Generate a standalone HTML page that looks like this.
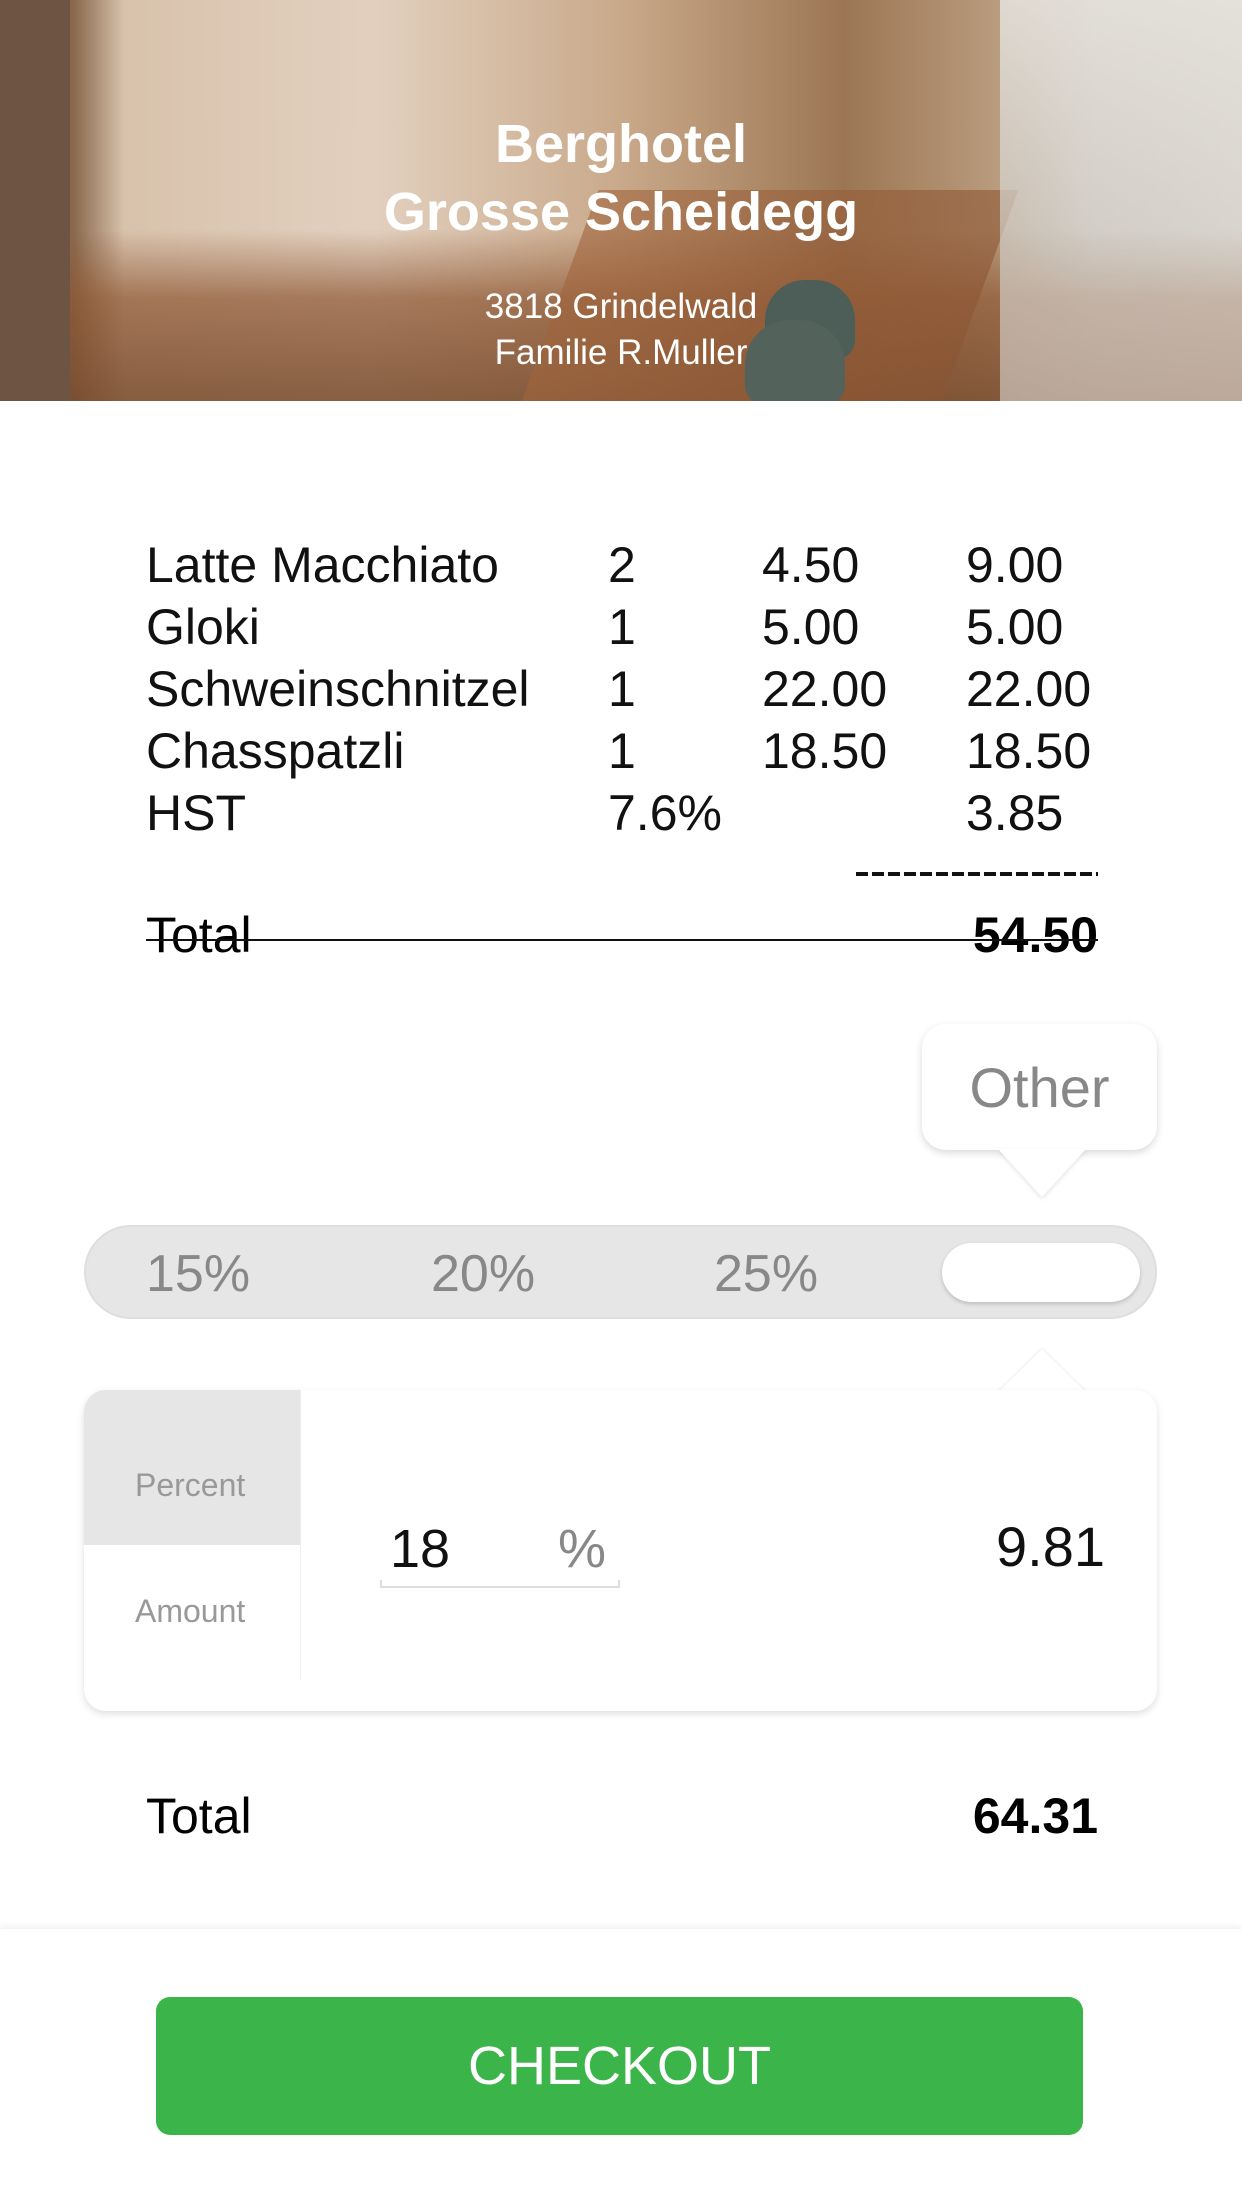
<!DOCTYPE html>
<html><head><meta charset="utf-8">
<style>
*{margin:0;padding:0;box-sizing:border-box}
body{width:1242px;height:2208px;background:#fff;font-family:"Liberation Sans",sans-serif;position:relative;overflow:hidden}
.abs{position:absolute}
.hdr{left:0;top:0;width:1242px;height:401px;overflow:hidden;
background:linear-gradient(90deg,#6b4a34 0%,#8a6a4e 6%,#d8c2ac 10%,#e2d0bf 30%,#c9a98a 50%,#9c7654 68%,#b89a7c 80%,#d7d2cc 88%,#ece8e3 100%)}
.t{color:#fff;text-align:center;width:1242px;left:0}
.row{font-size:50px;color:#111;height:62px;line-height:62px}
.c{position:absolute}
.g{color:#888}
</style></head><body>
<div class="abs hdr">
 <div class="abs" style="left:0;top:230px;width:1242px;height:171px;background:linear-gradient(180deg,rgba(150,90,50,0) 0%,rgba(140,85,50,.7) 40%,rgba(120,75,45,.85) 100%)"></div>
 <div class="abs" style="left:560px;top:190px;width:420px;height:211px;background:linear-gradient(90deg,rgba(160,100,60,.6),rgba(140,85,50,.6));transform:skewX(-20deg)"></div>
 <div class="abs" style="left:1000px;top:0;width:242px;height:401px;background:linear-gradient(180deg,rgba(227,223,217,.9),rgba(207,203,196,.7) 60%,rgba(220,215,210,.6))"></div>
 <div class="abs" style="left:765px;top:280px;width:90px;height:80px;border-radius:40px 40px 20px 20px;background:#4d5d57"></div>
 <div class="abs" style="left:745px;top:320px;width:100px;height:85px;border-radius:45px 45px 20px 20px;background:#53625b"></div>
 <div class="abs" style="left:0;top:0;width:70px;height:401px;background:#6e5442"></div>
</div>
<div class="abs t" style="top:110px;font-size:54px;font-weight:bold;line-height:68px">Berghotel<br>Grosse Scheidegg</div>
<div class="abs t" style="top:284px;font-size:35px;line-height:46px">3818 Grindelwald<br>Familie R.Muller</div>

<div class="abs" style="left:146px;top:534px;width:960px">
 <div class="row" style="position:relative"><span class="c" style="left:0">Latte Macchiato</span><span class="c" style="left:462px">2</span><span class="c" style="left:616px">4.50</span><span class="c" style="left:820px">9.00</span></div>
 <div class="row" style="position:relative"><span class="c" style="left:0">Gloki</span><span class="c" style="left:462px">1</span><span class="c" style="left:616px">5.00</span><span class="c" style="left:820px">5.00</span></div>
 <div class="row" style="position:relative"><span class="c" style="left:0">Schweinschnitzel</span><span class="c" style="left:462px">1</span><span class="c" style="left:616px">22.00</span><span class="c" style="left:820px">22.00</span></div>
 <div class="row" style="position:relative"><span class="c" style="left:0">Chasspatzli</span><span class="c" style="left:462px">1</span><span class="c" style="left:616px">18.50</span><span class="c" style="left:820px">18.50</span></div>
 <div class="row" style="position:relative"><span class="c" style="left:0">HST</span><span class="c" style="left:462px">7.6%</span><span class="c" style="left:820px">3.85</span></div>
</div>
<div class="abs" style="left:856px;top:872px;width:242px;height:4px;background:repeating-linear-gradient(90deg,#111 0 12px,transparent 12px 16px)"></div>
<div class="abs" style="left:146px;top:904px;font-size:50px;line-height:62px">Total</div>
<div class="abs" style="right:144px;top:904px;font-size:50px;line-height:62px;font-weight:bold">54.50</div>
<div class="abs" style="left:146px;top:939px;width:952px;height:2px;background:#111"></div>

<div class="abs" style="left:922px;top:1024px;width:235px;height:126px;background:#fff;border-radius:24px;box-shadow:0 3px 8px rgba(0,0,0,.15)"></div>
<div class="abs" style="left:998px;top:1149px;width:0;height:0;border-left:44px solid transparent;border-right:44px solid transparent;border-top:48px solid #fff;filter:drop-shadow(0 2px 2px rgba(0,0,0,.1))"></div>
<div class="abs g" style="left:922px;top:1056px;width:235px;text-align:center;font-size:56px;line-height:64px">Other</div>

<div class="abs" style="left:84px;top:1225px;width:1073px;height:94px;background:#e6e6e6;border-radius:47px;box-shadow:inset 0 0 0 2px #dedede"></div>
<div class="abs" style="left:942px;top:1243px;width:198px;height:59px;background:#fff;border-radius:30px;box-shadow:0 2px 4px rgba(0,0,0,.18)"></div>
<div class="abs g" style="left:146px;top:1244px;font-size:52px;line-height:60px">15%</div>
<div class="abs g" style="left:431px;top:1244px;font-size:52px;line-height:60px">20%</div>
<div class="abs g" style="left:714px;top:1244px;font-size:52px;line-height:60px">25%</div>

<div class="abs" style="left:998px;top:1349px;width:0;height:0;border-left:44px solid transparent;border-right:44px solid transparent;border-bottom:43px solid #fff;filter:drop-shadow(0 -1px 1px rgba(0,0,0,.08))"></div>
<div class="abs" style="left:84px;top:1390px;width:1073px;height:321px;background:#fff;border-radius:22px;box-shadow:0 3px 8px rgba(0,0,0,.13);overflow:hidden">
 <div class="abs" style="left:0;top:0;width:216px;height:155px;background:#e6e6e6"></div>
 <div class="abs" style="left:216px;top:0;width:1px;height:290px;background:#eee"></div>
</div>
<div class="abs g" style="left:135px;top:1465px;font-size:32px;line-height:40px;color:#999">Percent</div>
<div class="abs g" style="left:135px;top:1591px;font-size:32px;line-height:40px;color:#999">Amount</div>
<div class="abs" style="left:390px;top:1518px;font-size:54px;line-height:62px;color:#111">18</div>
<div class="abs g" style="left:558px;top:1518px;font-size:54px;line-height:62px">%</div>
<div class="abs" style="left:380px;top:1580px;width:240px;height:8px;border:2px solid #ddd;border-top:none"></div>
<div class="abs" style="right:137px;top:1516px;font-size:56px;line-height:62px;color:#111">9.81</div>

<div class="abs" style="left:146px;top:1785px;font-size:50px;line-height:62px">Total</div>
<div class="abs" style="right:144px;top:1785px;font-size:50px;line-height:62px;font-weight:bold">64.31</div>

<div class="abs" style="left:0;top:1929px;width:1242px;height:279px;background:#fff;box-shadow:0 -3px 6px rgba(0,0,0,.06)"></div>
<div class="abs" style="left:156px;top:1997px;width:927px;height:138px;background:#3bb54a;border-radius:14px;color:#fff;font-size:54px;line-height:138px;text-align:center">CHECKOUT</div>
</body></html>
